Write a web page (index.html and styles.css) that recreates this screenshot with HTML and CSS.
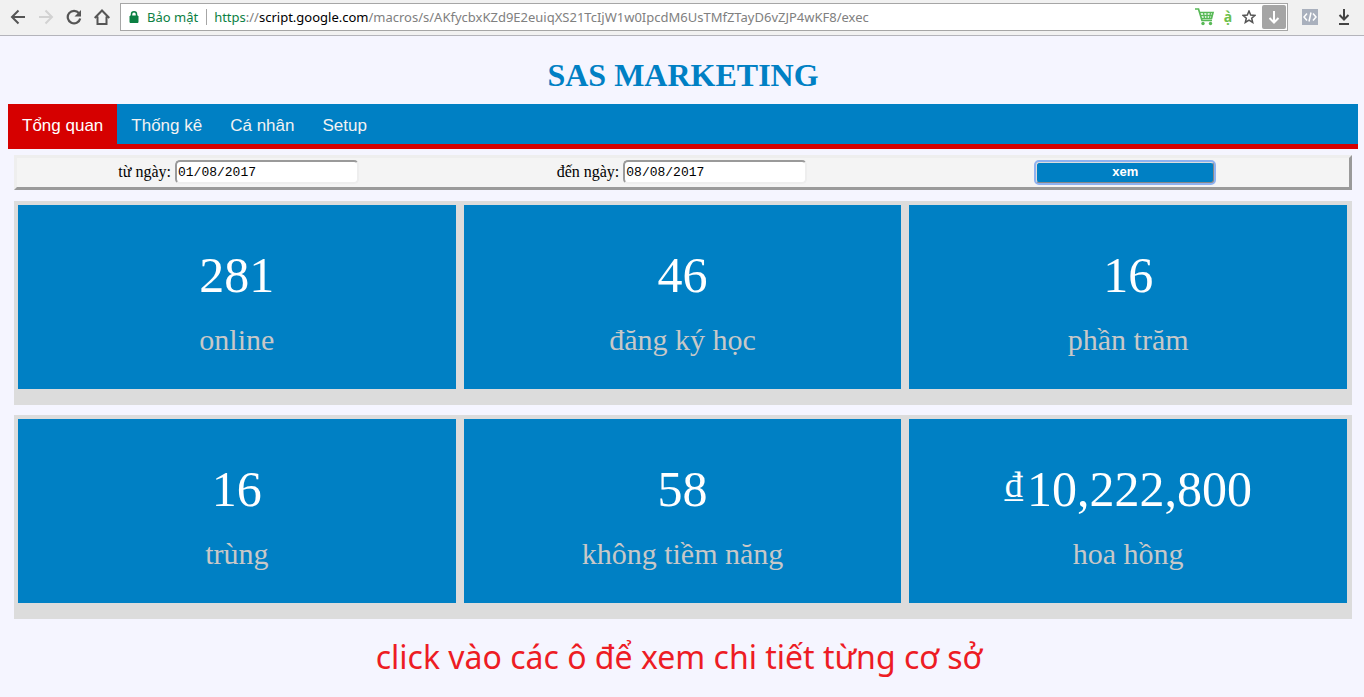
FILE: index.html
```html
<!DOCTYPE html>
<html lang="vi">
<head>
<meta charset="utf-8">
<title>SAS MARKETING</title>
<link rel="stylesheet" href="styles.css">
</head>
<body>
<header class="browser">
  <div class="browser-nav">
    <button class="icon-btn" aria-label="Back"><svg width="16" height="16" viewBox="0 0 16 16" fill="none" stroke="#555" stroke-width="2"><path d="M15 8H2M8.500 1.500L2 8l6.500 6.500"/></svg></button>
    <button class="icon-btn" aria-label="Forward"><svg width="16" height="16" viewBox="0 0 16 16" fill="none" stroke="#d2d2d2" stroke-width="2"><path d="M1 8h13M7.500 1.500L14 8l-6.500 6.500"/></svg></button>
    <button class="icon-btn" aria-label="Reload"><svg width="16" height="16" viewBox="0 0 16 16"><path d="M13 4.200A6.300 6.300 0 1 0 14.200 9.500" fill="none" stroke="#555" stroke-width="2.200"/><path d="M15 1v6.500H8.500z" fill="#555"/></svg></button>
    <button class="icon-btn" aria-label="Home"><svg width="16" height="16" viewBox="0 0 16 16" fill="none" stroke="#555" stroke-width="2"><path d="M.700 9L8 1.500 15.300 9M3.500 7.500V15h9V7.500"/></svg></button>
  </div>
  <div class="address">
    <svg width="10" height="12" viewBox="0 0 10 12"><path d="M1 5h8v6.500H1z" fill="#0b8043" stroke="#0b8043"/><path d="M2.500 5V3.200a2.500 2.400 0 0 1 5 0V5" fill="none" stroke="#0b8043" stroke-width="1.500"/></svg>
    <span class="secure">Bảo mật</span>
    <span class="url"><span class="scheme">https</span>://<span class="host">script.google.com</span>/macros/s/AKfycbxKZd9E2euiqXS21TcIjW1w0IpcdM6UsTMfZTayD6vZJP4wKF8/exec</span>
    <div class="address-tools">
      <button class="icon-btn" aria-label="Shopping"><svg width="20" height="18" viewBox="0 0 20 18" fill="none" stroke="#58b957"><path d="M0 1h3.500l3.500 11.500h10M4.500 4.500H18l-1.500 6H6.500" stroke-width="1.700"/><path d="M5 7.500h12M8.500 4.500l1 6M12 4.500v6M15.500 4.500l-1 6" stroke-width="1.300"/><circle cx="8" cy="15.500" r="1.700" fill="#58b957" stroke="none"/><circle cx="15.500" cy="15.500" r="1.700" fill="#58b957" stroke="none"/></svg></button>
      <button class="icon-btn accent" aria-label="Tiếng Việt">ạ̀</button>
      <button class="icon-btn" aria-label="Bookmark"><svg width="14" height="14" viewBox="0 0 14 14"><path d="M7 1l1.700 4 4.300.4-3.300 2.800 1 4.300L7 10.200l-3.700 2.300 1-4.300L1 5.400 5.300 5z" fill="none" stroke="#555" stroke-width="1.500"/></svg></button>
      <button class="icon-btn save" aria-label="Save"><svg width="12" height="14" viewBox="0 0 12 14" fill="none" stroke="#fff" stroke-width="2"><path d="M6 1v11M1.500 8L6 12.500 10.500 8"/></svg></button>
    </div>
  </div>
  <div class="extensions">
    <button class="icon-btn code" aria-label="Source"><svg width="14" height="10" viewBox="0 0 14 10" fill="none" stroke="#fff" stroke-width="1.500"><path d="M4 1.500L1 5l3 3.500M10 1.500L13 5l-3 3.500M8 .5L6 9.500"/></svg></button>
    <button class="icon-btn" aria-label="Downloads"><svg width="12" height="16" viewBox="0 0 12 16" fill="none" stroke="#444" stroke-width="2"><path d="M6 0v10M1.500 6L6 10.500 10.500 6M1 15h10"/></svg></button>
  </div>
</header>
<main class="page">
  <h1 class="title">SAS MARKETING</h1>
  <nav class="tabs">
    <a class="tab active" href="#overview">Tổng quan</a>
    <a class="tab" href="#stats">Thống kê</a>
    <a class="tab" href="#personal">Cá nhân</a>
    <a class="tab" href="#setup">Setup</a>
  </nav>
  <form class="filter">
    <div class="field"><label for="from">từ ngày:</label><input class="date" id="from" type="text" value="01/08/2017"></div>
    <div class="field"><label for="to">đến ngày:</label><input class="date" id="to" type="text" value="08/08/2017"></div>
    <div class="field"><button class="submit" type="button">xem</button></div>
  </form>
  <section class="panel">
    <button class="card"><span class="value">281</span><span class="label">online</span></button>
    <button class="card"><span class="value">46</span><span class="label">đăng ký học</span></button>
    <button class="card"><span class="value">16</span><span class="label">phần trăm</span></button>
  </section>
  <section class="panel">
    <button class="card"><span class="value">16</span><span class="label">trùng</span></button>
    <button class="card"><span class="value">58</span><span class="label">không tiềm năng</span></button>
    <button class="card"><span class="value"><span class="currency">₫</span>10,222,800</span><span class="label">hoa hồng</span></button>
  </section>
  <p class="hint">click vào các ô để xem chi tiết từng cơ sở</p>
</main>
</body>
</html>
```
FILE: styles.css
```css
* { box-sizing: border-box; }
body {
  margin: 0;
  background: #f5f5ff;
  font-family: "Liberation Serif", serif;
  font-size: 16px;
  color: #000;
}
button { font: inherit; cursor: pointer; }

/* Browser bar */
.browser {
  display: flex;
  align-items: center;
  height: 36px;
  padding: 0 14px 2px 10px;
  background: #f1f1f1;
  border-bottom: 1px solid #b4b4bb;
  font-family: "Noto Sans", sans-serif;
  font-size: 13px;
}
.browser-nav { display: flex; gap: 12px; margin-right: 10px; }
.icon-btn {
  display: flex;
  align-items: center;
  justify-content: center;
  min-width: 16px;
  padding: 0;
  border: 0;
  background: none;
}
.address {
  display: flex;
  flex: 1;
  align-items: center;
  height: 28px;
  padding: 0 1px 0 8px;
  background: #fff;
  border: 1px solid #a6a6a6;
  white-space: nowrap;
}
.secure {
  margin-left: 8px;
  padding-right: 8px;
  border-right: 1px solid #a6a6a6;
  line-height: 16px;
  color: #0b8043;
}
.url { margin-left: 7px; color: #808080; }
.scheme { color: #0b8043; }
.host { color: #000; }
.address-tools { display: flex; align-items: center; gap: 5px; margin-left: auto; }
.accent { color: #6cc04a; font-weight: 700; font-size: 14px; }
.save { width: 24px; height: 24px; border-radius: 2px; background: #a5a5a5; }
.extensions { display: flex; align-items: center; gap: 18px; margin: 0 -2px 0 14px; }
.code { height: 16px; background: #a9b0bd; }

/* Page */
.page { padding: 19px 6px 0 8px; }
.title {
  margin: 0;
  font-size: 32px;
  line-height: 40px;
  text-align: center;
  color: #0080c4;
}
.tabs {
  display: flex;
  margin-top: 9px;
  background: #0080c4;
  border-bottom: 5px solid #d60000;
  font-family: "Liberation Sans", sans-serif;
  font-size: 17px;
}
.tab {
  padding: 3px 14px 0;
  line-height: 37px;
  color: #f2f2f2;
  text-decoration: none;
}
.active { background: #d60000; color: #fff; }
.filter {
  display: grid;
  grid-template-columns: repeat(3, 1fr);
  margin: 6px 6px 11px;
  padding: 1px 2px 2px 0;
  background: #f4f4f4;
  border: 3px solid;
  border-color: #eee #9a9a9a #9a9a9a #eee;
}
.field { display: flex; align-items: center; justify-content: center; gap: 4px; height: 26px; }
.date {
  width: 184px;
  height: 24px;
  padding: 1px;
  border: 2px solid;
  border-color: #9a9a9a #eee #eee #9a9a9a;
  border-radius: 5px;
  background: #fff;
  font-family: "Liberation Mono", monospace;
  font-size: 13px;
}
.submit {
  width: 180px;
  height: 23px;
  padding: 0;
  border: 2px solid;
  border-color: #ddd #888 #888 #ddd;
  border-radius: 4px;
  outline: 2px solid #8fb2f0;
  outline-offset: -1px;
  background: #0080c4;
  font-family: "Liberation Sans", sans-serif;
  font-size: 13px;
  font-weight: 700;
  line-height: 16px;
  color: #fff;
}
.panel {
  display: grid;
  grid-template-columns: repeat(3, 1fr);
  gap: 8px;
  margin: 0 6px 10px;
  padding: 4px 5px 16px 4px;
  background: #dcdcdc;
}
.card {
  display: flex;
  flex-direction: column;
  align-items: center;
  gap: 14px;
  padding: 39px 0 29px;
  border: 0;
  background: #0080c4;
}
.value { font-size: 50px; line-height: 62px; color: #fff; }
.currency { margin-right: 4px; font-size: 36px; line-height: 1; vertical-align: 9px; }
.label { font-size: 30px; line-height: 40px; color: #c8c8c8; }
.hint {
  margin: 16px 0 0;
  padding-right: 8px;
  font-family: "Noto Sans", sans-serif;
  font-size: 32px;
  line-height: 44px;
  text-align: center;
  color: #ed1c24;
}
```
